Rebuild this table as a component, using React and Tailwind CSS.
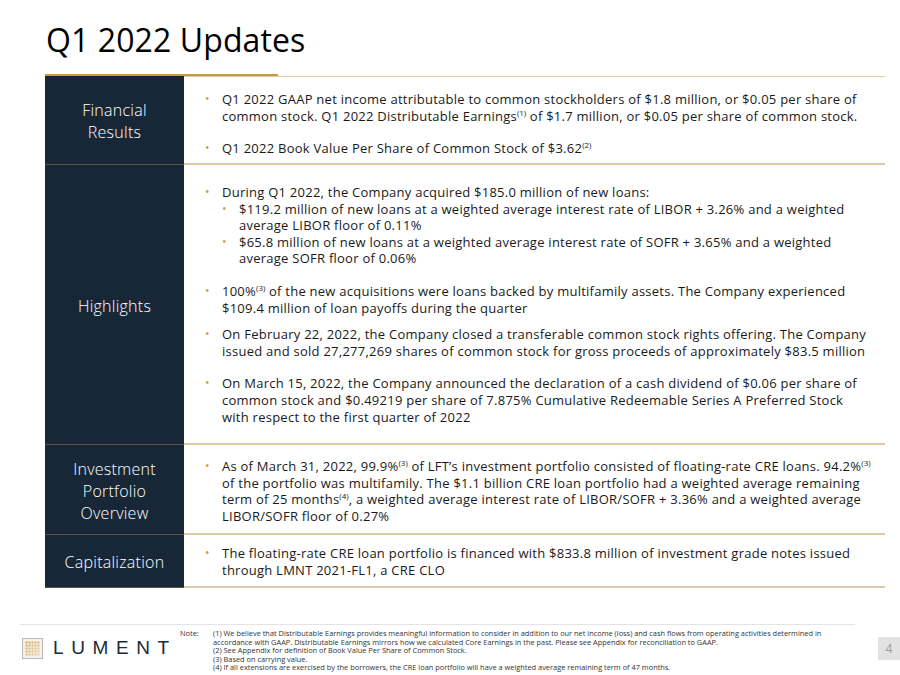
import React from "react";

const Sup = ({ children }) => (
  <span className="text-[8px] relative -top-[5px] leading-none tracking-normal">{children}</span>
);

const Bullet = ({ children, className = "" }) => (
  <div className={"flex " + className}>
    <span className="w-[17px] shrink-0 text-[#c9a14b] text-[12px] leading-[16.6px]">•</span>
    <div>{children}</div>
  </div>
);

const Label = ({ children }) => (
  <div className="bg-[#172738] text-white font-light text-[16px] leading-[22px] pt-[2px] flex items-center justify-center text-center border-b border-[#5b5440]">
    {children}
  </div>
);

const App = () => {
  return (
    <div className="w-[900px] h-[675px] bg-white relative overflow-hidden font-['Open_Sans',sans-serif] text-[#1a1a1a]">
      <h1 className="pl-[46px] pt-[21px] text-[32px] leading-[38px] text-black tracking-[0.1px]">Q1 2022 Updates</h1>
      <div className="ml-[45px] mt-[15px] w-[233px] h-[2px] bg-[#c69b45]" />

      <div className="ml-[45px] w-[840px] grid grid-cols-[139px_1fr] text-[13px] tracking-[0.25px] leading-[16.6px]">
        {/* Financial Results */}
        <Label>
          Financial
          <br />
          Results
        </Label>
        <div className="h-[89px] border-t border-[#dccba5] border-b-2 border-b-[#dccba5] pl-[21px] pt-[14px]">
          <Bullet>
            Q1 2022 GAAP net income attributable to common stockholders of $1.8 million, or $0.05 per share of
            <br />
            common stock. Q1 2022 Distributable Earnings<Sup>(1)</Sup> of $1.7 million, or $0.05 per share of common stock.
          </Bullet>
          <Bullet className="mt-[16px]">
            Q1 2022 Book Value Per Share of Common Stock of $3.62<Sup>(2)</Sup>
          </Bullet>
        </div>

        {/* Highlights */}
        <Label>Highlights</Label>
        <div className="h-[280px] border-b-2 border-[#dccba5] pl-[21px] pt-[19px]">
          <Bullet>
            During Q1 2022, the Company acquired $185.0 million of new loans:
            <Bullet>
              $119.2 million of new loans at a weighted average interest rate of LIBOR + 3.26% and a weighted
              <br />
              average LIBOR floor of 0.11%
            </Bullet>
            <Bullet>
              $65.8 million of new loans at a weighted average interest rate of SOFR + 3.65% and a weighted
              <br />
              average SOFR floor of 0.06%
            </Bullet>
          </Bullet>
          <Bullet className="mt-[16px]">
            100%<Sup>(3)</Sup> of the new acquisitions were loans backed by multifamily assets. The Company experienced
            <br />
            $109.4 million of loan payoffs during the quarter
          </Bullet>
          <Bullet className="mt-[10px]">
            On February 22, 2022, the Company closed a transferable common stock rights offering. The Company
            <br />
            issued and sold 27,277,269 shares of common stock for gross proceeds of approximately $83.5 million
          </Bullet>
          <Bullet className="mt-[16px]">
            On March 15, 2022, the Company announced the declaration of a cash dividend of $0.06 per share of
            <br />
            common stock and $0.49219 per share of 7.875% Cumulative Redeemable Series A Preferred Stock
            <br />
            with respect to the first quarter of 2022
          </Bullet>
        </div>

        {/* Investment Portfolio Overview */}
        <Label>
          Investment
          <br />
          Portfolio
          <br />
          Overview
        </Label>
        <div className="h-[90px] border-b-2 border-[#dccba5] pl-[21px] pt-[13px]">
          <Bullet>
            As of March 31, 2022, 99.9%<Sup>(3)</Sup> of LFT’s investment portfolio consisted of floating-rate CRE loans. 94.2%<Sup>(3)</Sup>
            <br />
            of the portfolio was multifamily. The $1.1 billion CRE loan portfolio had a weighted average remaining
            <br />
            term of 25 months<Sup>(4)</Sup>, a weighted average interest rate of LIBOR/SOFR + 3.36% and a weighted average
            <br />
            LIBOR/SOFR floor of 0.27%
          </Bullet>
        </div>

        {/* Capitalization */}
        <Label>Capitalization</Label>
        <div className="h-[53px] border-b-2 border-[#dccba5] pl-[21px] pt-[10px]">
          <Bullet>
            The floating-rate CRE loan portfolio is financed with $833.8 million of investment grade notes issued
            <br />
            through LMNT 2021-FL1, a CRE CLO
          </Bullet>
        </div>
      </div>

      {/* Footer */}
      <div className="absolute left-[20px] top-[624px] w-[835px] h-[1px] bg-[#e4e4e4]" />
      <div className="absolute left-[20px] top-[637px] flex items-center">
        <div className="w-[21px] h-[21px] border border-[#b8b8b8] bg-[#f6f2ea] flex items-center justify-center ml-[2px]">
          <svg width="15" height="15" viewBox="0 0 15 15">
            {[0, 1, 2, 3, 4].map((r) =>
              [0, 1, 2, 3, 4].map((c) => (
                <rect
                  key={r + "-" + c}
                  x={c * 3 + 0.5}
                  y={r * 3 + 0.5}
                  width="2"
                  height="2"
                  fill="#d3a54f"
                  opacity={1 - (r + c) * 0.07}
                />
              ))
            )}
          </svg>
        </div>
        <span className="ml-[10px] text-[19px] leading-[22px] tracking-[0.4em] text-[#1d2a38] font-['Liberation_Sans',sans-serif]">
          LUMENT
        </span>
      </div>

      <div className="absolute left-[180px] top-[629px] flex text-[7.4px] leading-[8.6px] text-[#333] font-['Open_Sans',sans-serif]">
        <span className="w-[33px]">Note:</span>
        <div className="whitespace-nowrap">
          <div>(1) We believe that Distributable Earnings provides meaningful information to consider in addition to our net income (loss) and cash flows from operating activities determined in</div>
          <div>accordance with GAAP. Distributable Earnings mirrors how we calculated Core Earnings in the past. Please see Appendix for reconciliation to GAAP.</div>
          <div>(2) See Appendix for definition of Book Value Per Share of Common Stock.</div>
          <div>(3) Based on carrying value.</div>
          <div>(4) If all extensions are exercised by the borrowers, the CRE loan portfolio will have a weighted average remaining term of 47 months.</div>
        </div>
      </div>

      <div className="absolute left-[878px] top-[637px] w-[22px] h-[23px] bg-[#e2e2e2] flex items-center justify-center text-[12px] text-[#9a9a9a]">
        4
      </div>
    </div>
  );
};

export default App;
